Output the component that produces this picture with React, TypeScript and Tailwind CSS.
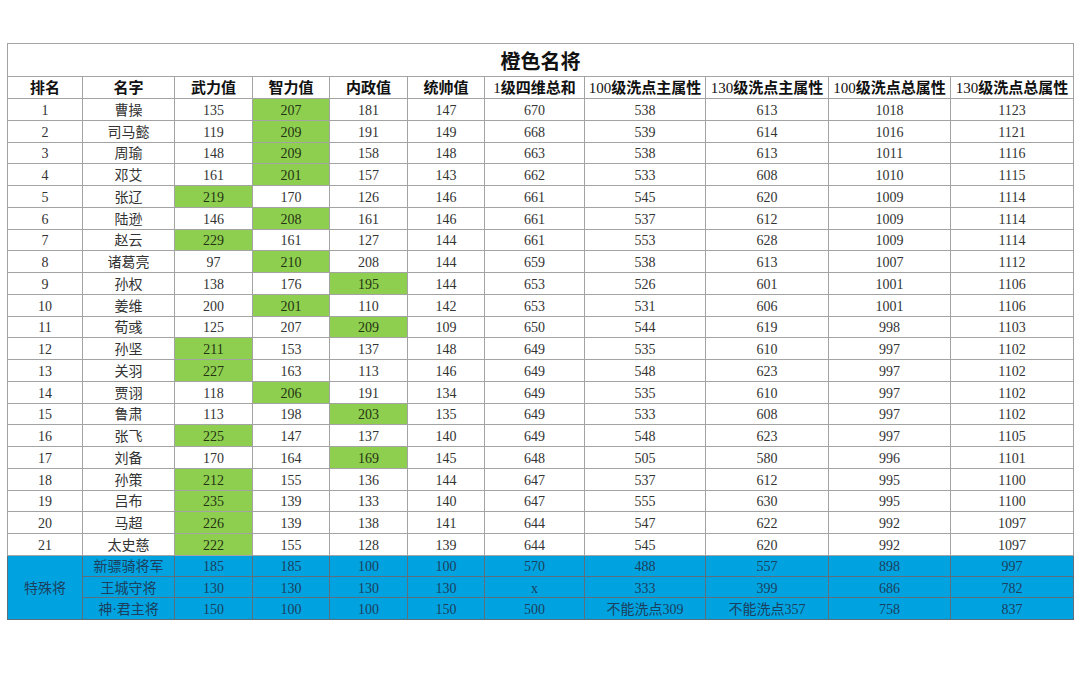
const headers = [
  "排名",
  "名字",
  "武力值",
  "智力值",
  "内政值",
  "统帅值",
  "1级四维总和",
  "100级洗点主属性",
  "130级洗点主属性",
  "100级洗点总属性",
  "130级洗点总属性",
];

const widths = ["w-[75px]", "w-[92px]", "w-[78px]", "w-[77px]", "w-[78px]", "w-[77px]", "w-[100px]", "w-[121px]", "w-[123px]", "w-[122px]", "w-[123px]"];

// [name, stats..., green column index]
const rows: [string, (number | string)[], number][] = [
  ["曹操", [135, 207, 181, 147, 670, 538, 613, 1018, 1123], 3],
  ["司马懿", [119, 209, 191, 149, 668, 539, 614, 1016, 1121], 3],
  ["周瑜", [148, 209, 158, 148, 663, 538, 613, 1011, 1116], 3],
  ["邓艾", [161, 201, 157, 143, 662, 533, 608, 1010, 1115], 3],
  ["张辽", [219, 170, 126, 146, 661, 545, 620, 1009, 1114], 2],
  ["陆逊", [146, 208, 161, 146, 661, 537, 612, 1009, 1114], 3],
  ["赵云", [229, 161, 127, 144, 661, 553, 628, 1009, 1114], 2],
  ["诸葛亮", [97, 210, 208, 144, 659, 538, 613, 1007, 1112], 3],
  ["孙权", [138, 176, 195, 144, 653, 526, 601, 1001, 1106], 4],
  ["姜维", [200, 201, 110, 142, 653, 531, 606, 1001, 1106], 3],
  ["荀彧", [125, 207, 209, 109, 650, 544, 619, 998, 1103], 4],
  ["孙坚", [211, 153, 137, 148, 649, 535, 610, 997, 1102], 2],
  ["关羽", [227, 163, 113, 146, 649, 548, 623, 997, 1102], 2],
  ["贾诩", [118, 206, 191, 134, 649, 535, 610, 997, 1102], 3],
  ["鲁肃", [113, 198, 203, 135, 649, 533, 608, 997, 1102], 4],
  ["张飞", [225, 147, 137, 140, 649, 548, 623, 997, 1105], 2],
  ["刘备", [170, 164, 169, 145, 648, 505, 580, 996, 1101], 4],
  ["孙策", [212, 155, 136, 144, 647, 537, 612, 995, 1100], 2],
  ["吕布", [235, 139, 133, 140, 647, 555, 630, 995, 1100], 2],
  ["马超", [226, 139, 138, 141, 644, 547, 622, 992, 1097], 2],
  ["太史慈", [222, 155, 128, 139, 644, 545, 620, 992, 1097], 2],
];

const special: [string, (number | string)[]][] = [
  ["新骠骑将军", [185, 185, 100, 100, 570, 488, 557, 898, 997]],
  ["王城守将", [130, 130, 130, 130, "x", 333, 399, 686, 782]],
  ["神·君主将", [150, 100, 100, 150, 500, "不能洗点309", "不能洗点357", 758, 837]],
];

const font = { fontFamily: '"Liberation Serif", "Noto Sans CJK SC", serif' };

// header: leading digits stay regular weight, the Chinese part is bold
function HeaderText({ text }: { text: string }) {
  const m = text.match(/^(\d+)(.*)$/);
  if (!m) return <>{text}</>;
  return (
    <>
      <span className="font-normal">{m[1]}</span>
      {m[2]}
    </>
  );
}

export default function App() {
  return (
    <div className="w-[1080px] h-[686px] bg-white pt-[43px] pl-[7px]" style={font}>
      <table className="border-collapse table-fixed w-[1066px] text-[14px] text-[#333]">
        <colgroup>
          {widths.map((w, i) => (
            <col key={i} className={w} />
          ))}
        </colgroup>
        <thead>
          <tr className="h-[33px]">
            <th
              colSpan={11}
              className="border border-[#a3a3a3] text-[20px] font-bold text-[#111] leading-none pt-[1px]"
              style={{ fontFamily: '"Noto Sans CJK SC", sans-serif' }}
            >
              橙色名将
            </th>
          </tr>
          <tr className="h-[22px]">
            {headers.map((h) => (
              <th
                key={h}
                className="border border-[#a3a3a3] font-semibold text-[15px] text-[#111] leading-none p-0 pt-[1px] whitespace-nowrap"
              >
                <HeaderText text={h} />
              </th>
            ))}
          </tr>
        </thead>
        <tbody>
          {rows.map(([name, vals, g], i) => (
            <tr key={name} className="h-[21.76px]">
              <td className="border border-[#a3a3a3] text-center leading-none p-0 pt-[3px]">{i + 1}</td>
              <td className="border border-[#a3a3a3] text-center leading-none p-0 pt-[3px]">{name}</td>
              {vals.map((v, j) => (
                <td
                  key={j}
                  className={
                    j + 2 === g
                      ? "border border-[#a3a3a3] text-center leading-none p-0 pt-[3px] bg-[#8fcf4f] text-[#243314]"
                      : "border border-[#a3a3a3] text-center leading-none p-0 pt-[3px]"
                  }
                >
                  {v}
                </td>
              ))}
            </tr>
          ))}
          {special.map(([name, vals], i) => (
            <tr key={name} className="h-[21.33px] bg-[#00a3e0] text-[#1d3f5e]">
              {i === 0 && (
                <td rowSpan={3} className="border border-[#5c6f7c] text-center leading-none p-0 pt-[3px]">
                  特殊将
                </td>
              )}
              <td className="border border-[#5c6f7c] text-center leading-none p-0 pt-[3px] whitespace-nowrap">{name}</td>
              {vals.map((v, j) => (
                <td key={j} className="border border-[#5c6f7c] text-center leading-none p-0 pt-[3px] whitespace-nowrap">
                  {v}
                </td>
              ))}
            </tr>
          ))}
        </tbody>
      </table>
    </div>
  );
}
